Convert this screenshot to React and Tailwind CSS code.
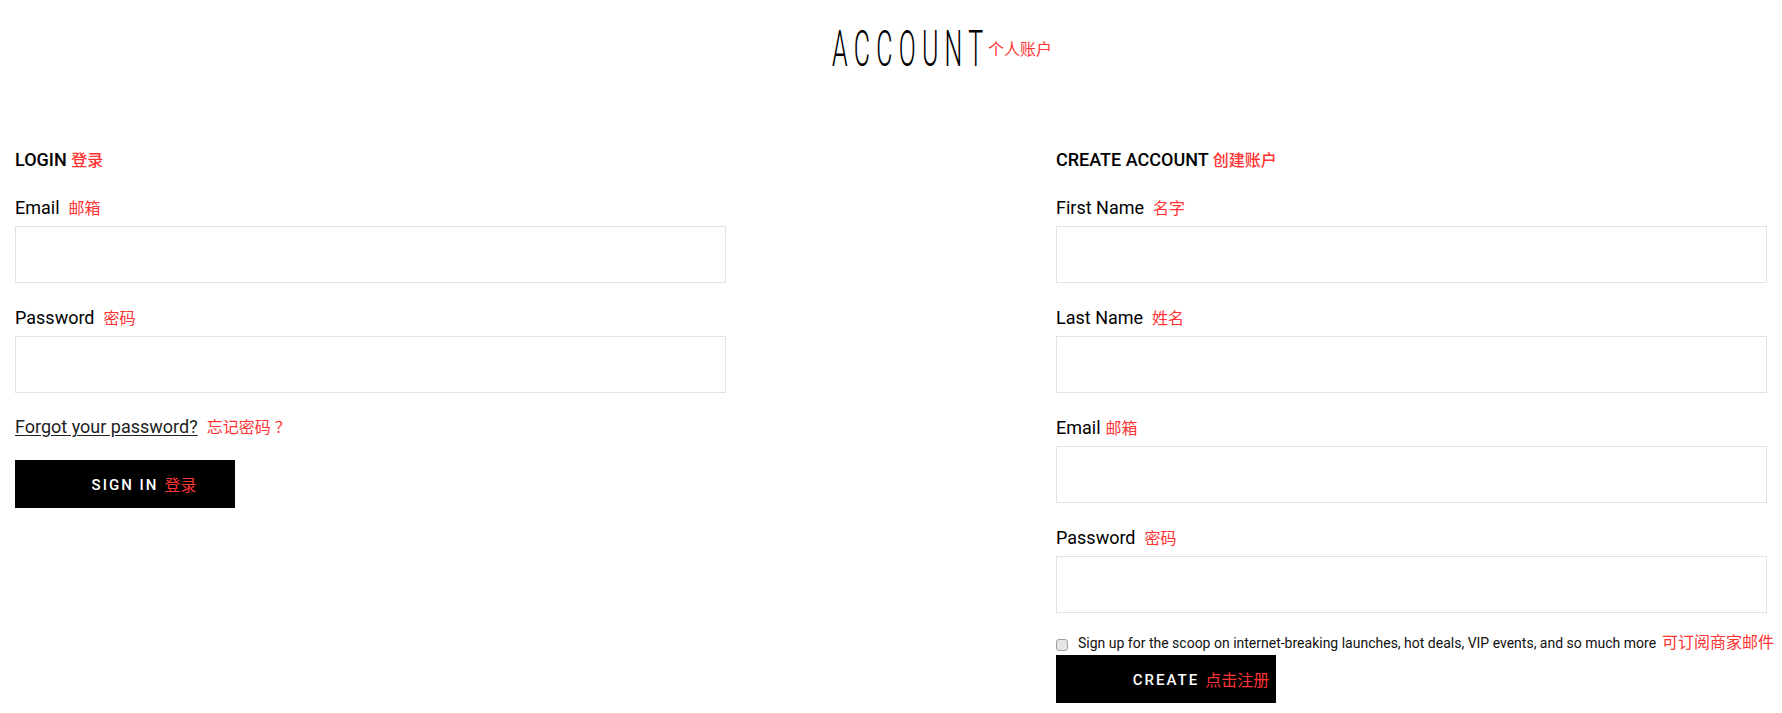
import React, { useState } from 'react';

const Zh = ({ children, className = '' }) => (
  <span className={`text-[16px] text-[#ff3333] ${className}`}>{children}</span>
);

const Field = ({ label, zh, gap = 'ml-[9px]', type = 'text', value, onChange }) => (
  <div className="mb-[23px]">
    <label className="block h-[24px] leading-[24px] text-[18px] text-black mb-[6px]">
      {label}
      <Zh className={gap}>{zh}</Zh>
    </label>
    <input
      type={type}
      value={value}
      onChange={onChange}
      className="block w-full h-[57px] border border-[#e2e2e2] px-3 text-[16px] outline-none"
    />
  </div>
);

const BlackButton = ({ label, zh }) => (
  <button className="relative flex items-center justify-center w-[220px] h-[48px] bg-black pt-[3px]">
    <span className="relative text-white text-[15px] font-medium tracking-[2px] leading-none">
      {label}
      <Zh className="absolute left-full top-1/2 -translate-y-1/2 ml-[6px] tracking-normal whitespace-nowrap font-normal">
        {zh}
      </Zh>
    </span>
  </button>
);

const App = () => {
  const [login, setLogin] = useState({ email: '', password: '' });
  const [reg, setReg] = useState({ first: '', last: '', email: '', password: '' });
  const [scoop, setScoop] = useState(false);

  return (
    <div className="min-h-[713px] bg-white font-['Roboto','Noto_Sans_CJK_SC',sans-serif] text-black">
      <div className="pt-[24px] flex justify-center items-center">
        <div className="flex items-center ml-[102px]">
          <h1 className="w-[150px] h-[50px] leading-[50px] overflow-visible whitespace-nowrap">
            <span className="inline-block origin-left scale-x-[0.5] text-[50px] font-light tracking-[0.25em]">
              ACCOUNT
            </span>
          </h1>
          <Zh className="ml-[6px] mt-[2px]">个人账户</Zh>
        </div>
      </div>

      <div className="flex justify-between px-[15px] mt-[74px]">
        <div className="w-[711px]">
          <h2 className="h-[24px] leading-[24px] text-[18px] font-medium mb-[24px]">
            LOGIN <Zh>登录</Zh>
          </h2>
          <Field
            label="Email"
            zh="邮箱"
            value={login.email}
            onChange={(e) => setLogin({ ...login, email: e.target.value })}
          />
          <Field
            label="Password"
            zh="密码"
            type="password"
            value={login.password}
            onChange={(e) => setLogin({ ...login, password: e.target.value })}
          />
          <div className="h-[24px] leading-[24px] text-[18px] mb-[21px] -mt-[1px]">
            <a href="#" className="underline underline-offset-[2px] text-[#222]">
              Forgot your password?
            </a>
            <Zh className="ml-[9px]">忘记密码 ？</Zh>
          </div>
          <BlackButton label="SIGN IN" zh="登录" />
        </div>

        <div className="w-[711px]">
          <h2 className="h-[24px] leading-[24px] text-[18px] font-medium mb-[24px]">
            CREATE ACCOUNT <Zh>创建账户</Zh>
          </h2>
          <Field
            label="First Name"
            zh="名字"
            value={reg.first}
            onChange={(e) => setReg({ ...reg, first: e.target.value })}
          />
          <Field
            label="Last Name"
            zh="姓名"
            value={reg.last}
            onChange={(e) => setReg({ ...reg, last: e.target.value })}
          />
          <Field
            label="Email"
            zh="邮箱"
            gap="ml-[5px]"
            value={reg.email}
            onChange={(e) => setReg({ ...reg, email: e.target.value })}
          />
          <Field
            label="Password"
            zh="密码"
            type="password"
            value={reg.password}
            onChange={(e) => setReg({ ...reg, password: e.target.value })}
          />
          <label className="flex items-center h-[20px] -mt-[3px] whitespace-nowrap">
            <input
              type="checkbox"
              checked={scoop}
              onChange={(e) => setScoop(e.target.checked)}
              className="appearance-none shrink-0 w-[12px] h-[12px] rounded-[3px] border border-[#a0a0a0] bg-[#e6e6e6] mr-[10px] mt-[3px] checked:bg-black"
            />
            <span className="text-[14px] text-[#111]">
              Sign up for the scoop on internet-breaking launches, hot deals, VIP events, and so much more
            </span>
            <Zh className="ml-[6px]">可订阅商家邮件</Zh>
          </label>
          <div className="mt-[2px]">
            <BlackButton label="CREATE" zh="点击注册" />
          </div>
        </div>
      </div>
    </div>
  );
};

export default App;
